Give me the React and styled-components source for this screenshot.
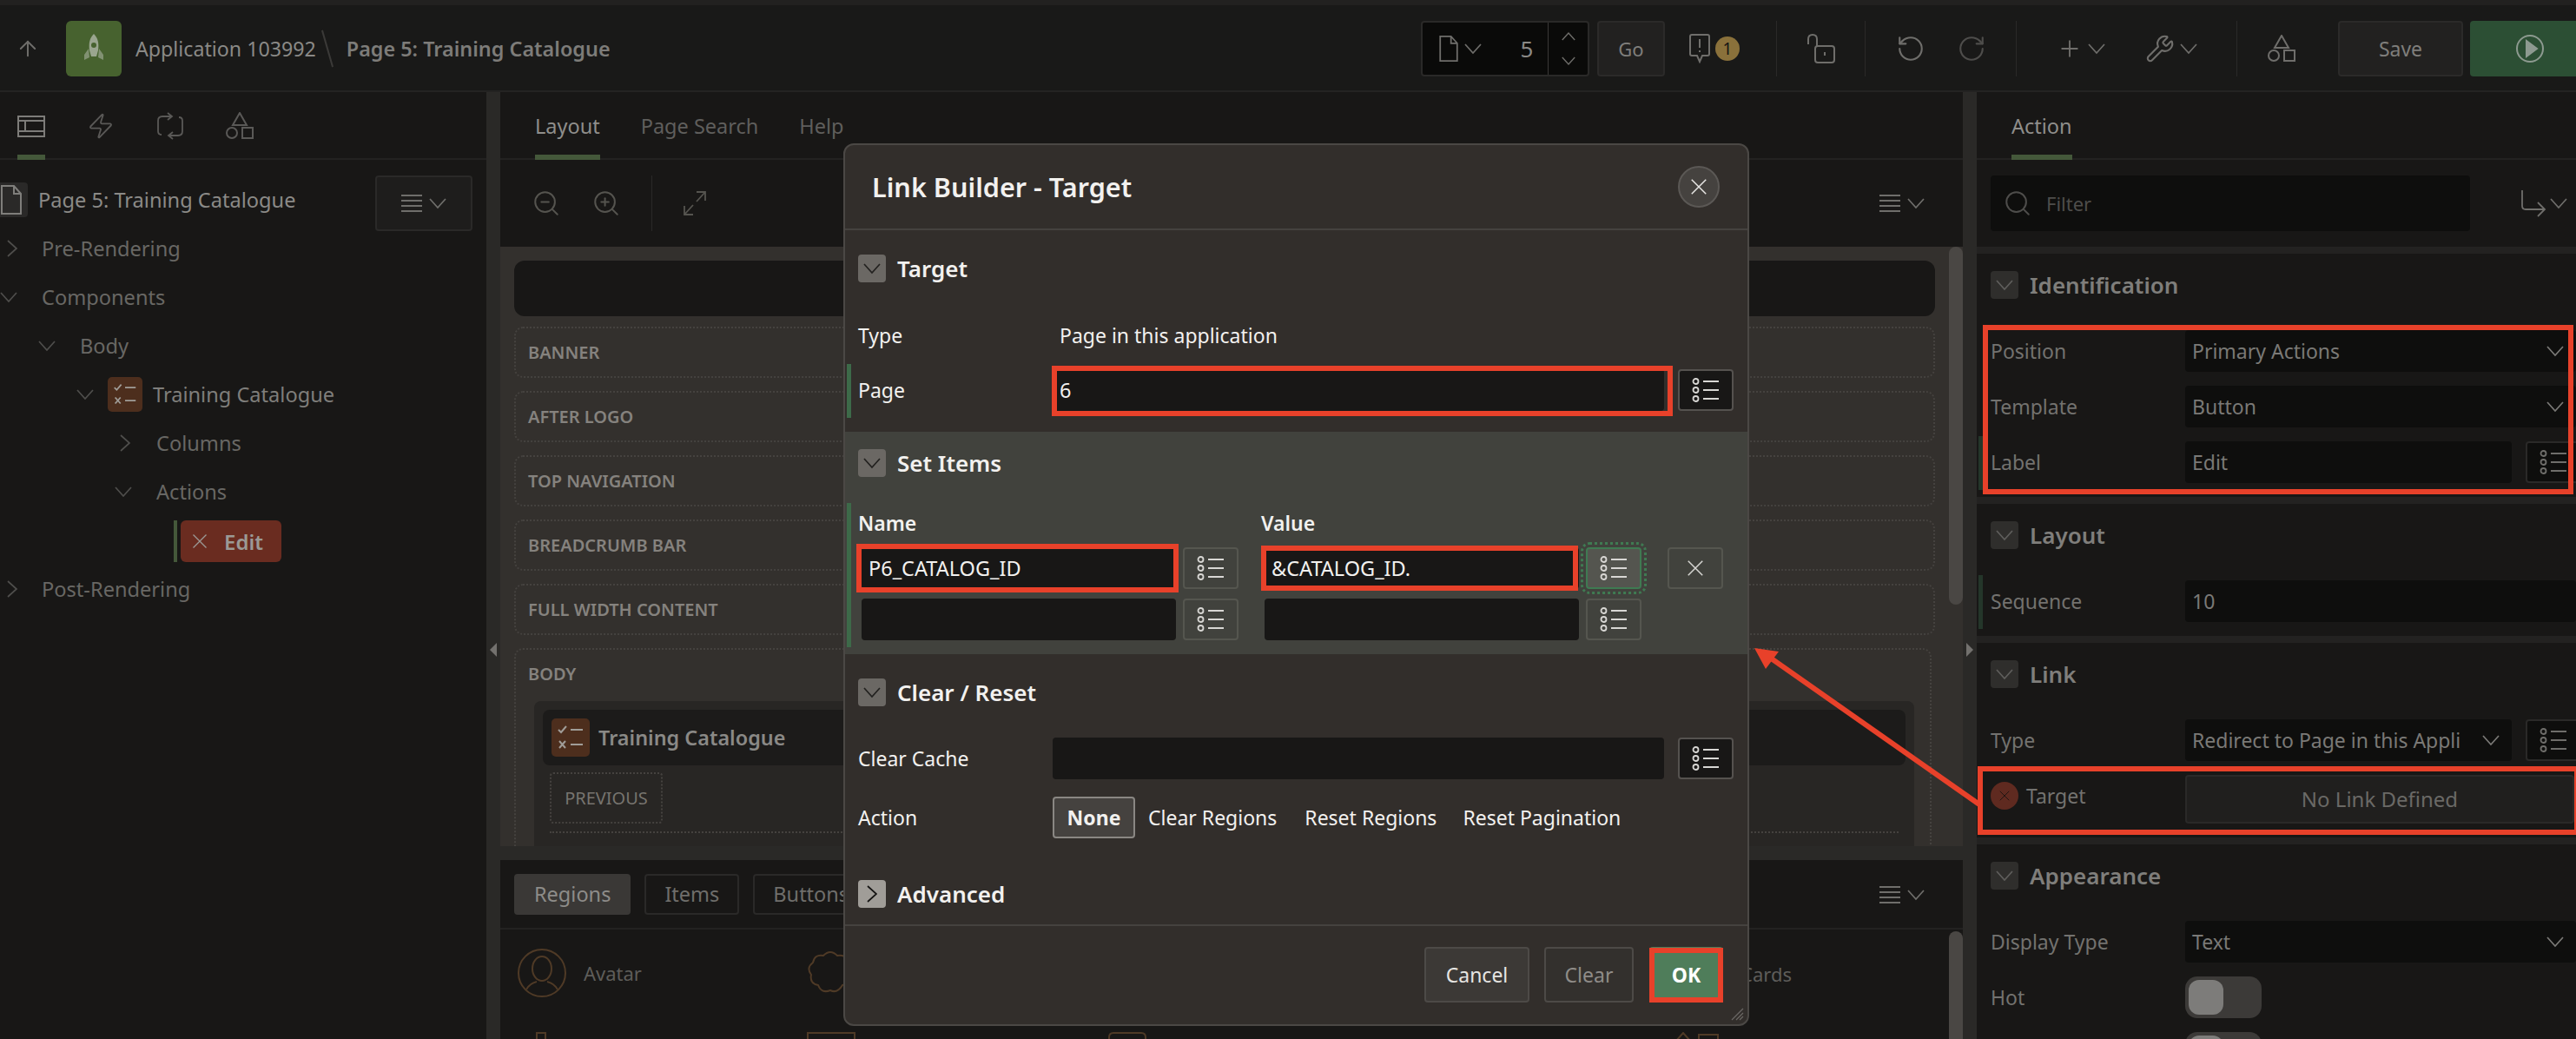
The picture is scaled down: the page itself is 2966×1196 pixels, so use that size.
import React from 'react';
import styled, { createGlobalStyle } from 'styled-components';
import { ArrowUp, Zap, RotateCcw, RotateCw, Wrench, Search, ZoomIn, ZoomOut, Plus } from 'lucide-react';

const GlobalStyle = createGlobalStyle`
  html, body { margin: 0; padding: 0; background: #181716; }
  body { font-family: "Noto Sans", "Open Sans", sans-serif; overflow: hidden; }
  * { box-sizing: border-box; }
`;

const RED = '#e8412a';

const Page = styled.div`
  position: relative;
  width: 2966px;
  height: 1196px;
  overflow: hidden;
  background: #181716;
  display: flex;
  flex-direction: column;
`;

/* top bar */
const TopBar = styled.div`
  height: 106px;
  flex: none;
  background: #191918;
  border-top: 6px solid #222120;
  border-bottom: 2px solid #242322;
  padding-top: 18px;
  display: flex;
  align-items: flex-start;
  color: #8b8a87;
`;
const BackSlot = styled.div`
  width: 76px;
  height: 64px;
  display: flex;
  align-items: center;
  padding-left: 18px;
  color: #6f6e6b;
`;
const AppTile = styled.div`
  width: 64px;
  height: 64px;
  border-radius: 6px;
  background: #47622f;
  display: flex;
  align-items: center;
  justify-content: center;
  color: #9aa58f;
`;
const AppName = styled.div`
  margin-left: 16px;
  line-height: 64px;
  font-size: 23.2px;
  color: #8a8986;
  white-space: nowrap;
`;
const Slash = styled.div`
  width: 2px;
  height: 44px;
  margin: 10px 21px 0 12px;
  background: #3b3a38;
  transform: rotate(-16deg);
`;
const PageName = styled.div`
  line-height: 64px;
  font-size: 23.4px;
  font-weight: 600;
  color: #7d7c79;
  white-space: nowrap;
`;
const TopTools = styled.div`
  margin-left: auto;
  display: flex;
  align-items: center;
  height: 64px;
`;
const PageBox = styled.div`
  width: 194px;
  height: 64px;
  background: #0a0a09;
  border: 2px solid #2a2928;
  border-radius: 4px;
  display: flex;
  align-items: center;
  color: #6f6e6b;
`;
const PageBoxIcon = styled.div`
  display: flex;
  align-items: center;
  gap: 6px;
  padding-left: 18px;
  width: 100px;
`;
const PageNumber = styled.div`
  width: 40px;
  font-size: 26px;
  color: #8a8986;
  text-align: center;
`;
const Stepper = styled.div`
  margin-left: 4px;
  flex: 1;
  height: 100%;
  border-left: 1px solid #3a3937;
  display: flex;
  flex-direction: column;
  align-items: center;
  justify-content: space-between;
  padding: 8px 0;
`;
const GoButton = styled.div`
  width: 78px;
  height: 64px;
  margin-left: 9px;
  background: #222120;
  border: 2px solid #2b2a29;
  border-radius: 4px;
  display: flex;
  align-items: center;
  justify-content: center;
  font-size: 22px;
  color: #7f7e7b;
`;
const Notify = styled.div`
  width: 128px;
  padding-left: 28px;
  display: flex;
  align-items: center;
  gap: 6px;
  color: #6f6e6b;
`;
const Badge = styled.div`
  width: 28px;
  height: 28px;
  border-radius: 50%;
  background: #8a713b;
  color: #151514;
  font-size: 19px;
  line-height: 28px;
  text-align: center;
`;
const ToolGroup = styled.div`
  height: 64px;
  width: ${p => p.$w}px;
  border-left: 1px solid #2a2928;
  display: flex;
  align-items: center;
  justify-content: center;
  gap: ${p => p.$gap || 8}px;
  color: #6f6e6b;
`;
const ToolPair = styled.div`
  display: flex;
  align-items: center;
  gap: 6px;
`;
const DimIcon = styled.div`
  display: flex;
  color: #4e4d4b;
`;
const SaveButton = styled.div`
  width: 144px;
  height: 64px;
  margin-left: 15px;
  background: #222120;
  border: 2px solid #2b2a29;
  border-radius: 4px;
  display: flex;
  align-items: center;
  justify-content: center;
  font-size: 23px;
  color: #7f7e7b;
`;
const RunButton = styled.div`
  width: 122px;
  height: 64px;
  margin-left: 8px;
  background: #2c4f34;
  border-radius: 4px 0 0 4px;
  display: flex;
  align-items: center;
  padding-left: 52px;
  color: #8d9a90;
`;

/* main columns */
const Main = styled.div`
  flex: 1;
  display: grid;
  grid-template-columns: 560px 16px 1684px 16px 690px;
  min-height: 0;
`;
const Column = styled.div`
  display: flex;
  flex-direction: column;
  min-height: 0;
  overflow: hidden;
`;
const Splitter = styled.div`
  background: #2a2927;
  display: flex;
  align-items: flex-start;
  justify-content: center;
  padding-top: 634px;
`;
const SplitArrow = styled.div`
  width: 0;
  height: 0;
  border-top: 8px solid transparent;
  border-bottom: 8px solid transparent;
  ${p => p.$left ? 'border-right: 8px solid #73716e;' : 'border-left: 8px solid #73716e;'}
`;
const Tabs = styled.div`
  height: 78px;
  flex: none;
  display: flex;
  border-bottom: 2px solid #232221;
  padding-left: ${p => p.$pad}px;
  gap: ${p => p.$gap || 0}px;
`;
const Tab = styled.div`
  height: 78px;
  display: flex;
  align-items: center;
  font-size: 23.5px;
  padding-top: 6px;
  color: ${p => p.$on ? '#8f8e8b' : '#5f5e5c'};
  border-bottom: 6px solid ${p => p.$on ? '#44583a' : 'transparent'};
  white-space: nowrap;
`;
const IconTab = styled(Tab)`
  width: ${p => p.$w || 32}px;
  justify-content: center;
  color: ${p => p.$on ? '#7d7c79' : '#5a5957'};
`;

/* tree */
const TreeHead = styled.div`
  height: 74px;
  flex: none;
  display: flex;
  align-items: flex-start;
`;
const RootIcon = styled.div`
  width: 32px;
  height: 40px;
  margin-top: 26px;
  background: #2a2928;
  border-radius: 0 4px 4px 0;
  color: #7f7e7b;
  display: flex;
  align-items: center;
`;
const RootName = styled.div`
  margin: 28px 0 0 12px;
  font-size: 23.6px;
  line-height: 36px;
  color: #8b8a87;
`;
const MenuButton = styled.div`
  width: 112px;
  height: 64px;
  margin: 18px 16px 0 auto;
  background: #1e1d1c;
  border: 2px solid #2a2928;
  border-radius: 4px;
  display: flex;
  align-items: center;
  justify-content: center;
  gap: 8px;
  color: #6f6e6b;
`;
const TreeRow = styled.div`
  height: 56px;
  flex: none;
  display: flex;
  align-items: center;
  padding-left: ${p => p.$indent}px;
  font-size: 23.6px;
  color: #686764;
`;
const TreeArrow = styled.div`
  width: ${p => p.$w || 48}px;
  flex: none;
  display: flex;
  color: #4f4e4c;
`;
const RegionTile = styled.div`
  width: ${p => p.$size}px;
  height: ${p => p.$size}px;
  flex: none;
  border-radius: 5px;
  background: #4d2e1d;
  color: #a09d98;
  display: flex;
  align-items: center;
  justify-content: center;
`;
const TreeTitle = styled.span`
  margin-left: 12px;
  color: #7f7e7b;
`;
const EditMark = styled.div`
  width: 4px;
  height: 48px;
  margin: 2px 4px 0 0;
  background: #44583a;
`;
const EditChip = styled.div`
  width: 116px;
  height: 48px;
  margin-top: 2px;
  border-radius: 6px;
  background: #6a2c20;
  color: #9b9995;
  display: flex;
  align-items: center;
  padding-left: 12px;
  gap: 18px;
  font-weight: 600;
  font-size: 24px;
`;

/* centre */
const CanvasTools = styled.div`
  height: 100px;
  flex: none;
  display: flex;
  align-items: center;
  padding: 0 44px 0 36px;
  color: #55544f;
  gap: 35px;
`;
const ToolRule = styled.div`
  width: 1px;
  height: 64px;
  background: #2a2928;
`;
const CanvasMenu = styled.div`
  margin-left: auto;
  display: flex;
  align-items: center;
  gap: 8px;
  color: #6f6e6b;
`;
const Canvas = styled.div`
  position: relative;
  height: 690px;
  flex: none;
  overflow: hidden;
  background: #33302d;
  padding: 16px 32px 0 16px;
  display: flex;
  flex-direction: column;
  gap: 15px;
`;
const CanvasBand = styled.div`
  height: 64px;
  flex: none;
  margin-bottom: -3px;
  background: #181716;
  border-radius: 12px;
`;
const Slot = styled.div`
  height: ${p => p.$h || 59}px;
  flex: none;
  border: 2px dotted #45423f;
  border-radius: 10px;
  padding: 0 14px;
  font-size: 20px;
  font-weight: 600;
  line-height: 55px;
  color: #85827e;
  text-transform: uppercase;
`;
const BodySlot = styled(Slot)`
  height: 300px;
  width: 1632px;
  margin-right: 4px;
`;
const RegionCard = styled.div`
  margin: 4px 4px 0 7px;
  background: #282624;
  border-radius: 8px 8px 0 0;
  height: 200px;
  padding: 10px;
`;
const RegionHead = styled.div`
  height: 64px;
  background: #1c1b1a;
  border-radius: 8px;
  padding-left: 10px;
  display: flex;
  align-items: center;
  gap: 10px;
  font-size: 23.4px;
  font-weight: 600;
  text-transform: none;
  color: #8a8986;
`;
const PositionSlot = styled.div`
  width: 130px;
  height: 59px;
  margin: 8px 0 0 8px;
  border: 2px dotted #45423f;
  border-radius: 4px;
  font-size: 20px;
  font-weight: 400;
  line-height: 55px;
  text-align: center;
  color: #77746f;
`;
const NextSlot = styled.div`
  height: 40px;
  margin: 9px 8px 0 8px;
  border-top: 2px dotted #45423f;
`;
const Scrollbar = styled.div`
  position: absolute;
  right: 0;
  top: ${p => p.$top}px;
  width: 16px;
  height: ${p => p.$h}px;
  background: #4a4744;
  border-radius: 8px;
`;
const HSplit = styled.div`
  height: 16px;
  flex: none;
  background: #2a2927;
`;
const Gallery = styled.div`
  position: relative;
  flex: 1;
`;
const GalleryTabs = styled.div`
  height: 80px;
  padding: 16px 0 0 16px;
  border-bottom: 2px solid #232221;
  display: flex;
  gap: 16px;
  align-items: flex-start;
  justify-content: flex-start;
`;
const GalleryTab = styled.div`
  height: 47px;
  padding: 0 21px;
  border-radius: 4px;
  font-size: 23.5px;
  line-height: 43px;
  background: ${p => p.$on ? '#3a3836' : 'transparent'};
  border: 2px solid ${p => p.$on ? '#3a3836' : '#2a2928'};
  color: ${p => p.$on ? '#8d8c89' : '#6f6e6b'};
`;
const GalleryMenu = styled.div`
  margin: 4px 44px 0 auto;
  display: flex;
  align-items: center;
  gap: 8px;
  color: #6f6e6b;
  height: 40px;
`;
const GalleryItem = styled.div`
  position: absolute;
  left: ${p => p.$x}px;
  top: ${p => p.$y}px;
  display: flex;
  align-items: center;
  gap: 20px;
  font-size: 22px;
  color: #5e5d5a;
  white-space: nowrap;
`;

/* right */
const FilterRow = styled.div`
  height: 100px;
  flex: none;
  padding: 18px 0 0 16px;
  display: flex;
  align-items: flex-start;
`;
const FilterBox = styled.div`
  width: 552px;
  height: 64px;
  background: #0e0e0d;
  border-radius: 4px;
  display: flex;
  align-items: center;
  gap: 16px;
  padding-left: 14px;
  font-size: 22px;
  color: #4e4d4b;
`;
const ReturnMenu = styled.div`
  margin: 16px 0 0 58px;
  display: flex;
  align-items: center;
  gap: 4px;
  color: #6f6e6b;
`;
const PropSection = styled.div`
  border-top: 8px solid #232221;
  padding: 20px 0 16px 16px;
`;
const SectionHead = styled.div`
  height: 32px;
  display: flex;
  align-items: center;
  gap: 13px;
  margin-bottom: 36px;
  font-size: 26px;
  font-weight: 600;
  color: #7f7e7b;
  line-height: 32px;
`;
const Toggle = styled.div`
  width: 32px;
  height: 32px;
  border-radius: 4px;
  background: #2f2e2c;
  color: #5f5e5c;
  display: flex;
  align-items: center;
  justify-content: center;
`;
const PropRow = styled.div`
  position: relative;
  min-height: 48px;
  display: flex;
  align-items: ${p => p.$top ? 'flex-start' : 'center'};
  margin-bottom: 16px;
  &:last-child { margin-bottom: 0; }
  ${p => p.$req && `&::before {
    content: '';
    position: absolute;
    left: -14px;
    top: -6px;
    bottom: -8px;
    width: 5px;
    background: #24362a;
  }`}
`;
const PropLabel = styled.div`
  width: 224px;
  flex: none;
  display: flex;
  align-items: center;
  gap: 9px;
  font-size: 23px;
  color: #73726f;
  margin-top: ${p => p.$mt || 0}px;
`;
const PropInput = styled.div`
  width: ${p => p.$w ? `${p.$w}px` : 'auto'};
  flex: ${p => p.$w ? 'none' : 1};
  height: 48px;
  background: #0e0e0d;
  border-radius: 4px;
  display: flex;
  align-items: center;
  justify-content: space-between;
  padding: 0 14px 0 8px;
  font-size: 23px;
  color: #7a7976;
  white-space: nowrap;
  overflow: hidden;
`;
const PropLov = styled.div`
  width: 64px;
  height: 48px;
  margin-left: 16px;
  flex: none;
  border: 2px solid #2a2928;
  border-radius: 4px;
  background: #0e0e0d;
  color: #6f6e6b;
  display: flex;
  align-items: center;
  justify-content: center;
`;
const LinkButton = styled.div`
  flex: 1;
  height: 56px;
  background: #201f1e;
  border: 2px solid #2a2928;
  border-radius: 4px;
  font-size: 24px;
  line-height: 52px;
  text-align: center;
  color: #6a6966;
  margin-right: 2px;
`;
const ErrorDot = styled.div`
  width: 32px;
  height: 32px;
  border-radius: 50%;
  background: #5f2a20;
  color: #1e1311;
  display: flex;
  align-items: center;
  justify-content: center;
`;
const Switch = styled.div`
  width: 88px;
  height: 48px;
  border-radius: 14px;
  background: #3c3a38;
  padding: 4px;
`;
const Knob = styled.div`
  width: 40px;
  height: 40px;
  border-radius: 12px;
  background: #7d7c7a;
`;
const FrameBox = styled.div`
  position: absolute;
  inset: ${p => p.$inset};
  border: 6px solid ${RED};
  pointer-events: none;
  z-index: 3;
`;

/* dialog */
const Dialog = styled.div`
  position: absolute;
  left: 971px;
  top: 165px;
  width: 1043px;
  height: 1016px;
  background: #322e2b;
  border: 2px solid #4b4845;
  border-radius: 12px;
  color: #f2f1ef;
  overflow: hidden;
  display: flex;
  flex-direction: column;
  z-index: 5;
`;
const DialogHead = styled.div`
  height: 98px;
  flex: none;
  border-bottom: 2px solid #45423f;
  padding: 0 32px 0 31px;
  display: flex;
  align-items: center;
  justify-content: space-between;
  font-size: 30.6px;
  font-weight: 600;
`;
const CloseButton = styled.div`
  width: 48px;
  height: 48px;
  border-radius: 50%;
  border: 2px solid #5b5855;
  background: #45423f;
  display: flex;
  align-items: center;
  justify-content: center;
  color: #e8e7e5;
`;
const DialogSection = styled.div`
  padding: ${p => p.$pad};
  background: ${p => p.$alt ? '#41423d' : 'transparent'};
`;
const DialogHeading = styled.div`
  height: 32px;
  display: flex;
  align-items: center;
  gap: 13px;
  font-size: 26px;
  font-weight: 600;
  margin-top: ${p => p.$mt || 0}px;
  margin-bottom: ${p => p.$mb || 0}px;
`;
const DialogToggle = styled.div`
  width: 32px;
  height: 32px;
  border-radius: 4px;
  background: ${p => p.$open ? '#6b6864' : '#a09d98'};
  color: ${p => p.$open ? '#22211f' : '#151413'};
  display: flex;
  align-items: center;
  justify-content: center;
`;
const FormRow = styled.div`
  position: relative;
  height: 48px;
  display: flex;
  align-items: center;
  font-size: 23px;
  margin-top: ${p => p.$mt || 0}px;
`;
const FormLabel = styled.div`
  width: 224px;
  flex: none;
`;
const FormValue = styled.div`
  padding-left: 8px;
`;
const RequiredBar = styled.div`
  position: absolute;
  left: -13px;
  top: ${p => p.$top}px;
  bottom: ${p => p.$bottom}px;
  width: 5px;
  background: #3d6a49;
`;
const Field = styled.div`
  position: relative;
  width: ${p => p.$w}px;
  height: 48px;
  flex: none;
  background: #181716;
  border-radius: 4px;
  font-size: 23.5px;
  line-height: 48px;
  padding: 0 8px;
  color: #f2f1ef;
`;
const ValueField = styled(Field)`
  margin-left: 30px;
`;
const LovButton = styled.div`
  position: relative;
  width: 64px;
  height: 48px;
  flex: none;
  margin-left: ${p => p.$ml || 8}px;
  border: 2px solid ${p => p.$focus ? '#3f7a52' : p.$dark ? '#55524f' : '#55564f'};
  border-radius: 4px;
  background: ${p => p.$dark ? '#181716' : '#41423d'};
  color: #d8d7d4;
  display: flex;
  align-items: center;
  justify-content: center;
  ${p => p.$focus && `background: #54554f; outline: 3px dotted #3f7a52; outline-offset: 3px;`}
`;
const ItemGrid = styled.div`
  position: relative;
  margin-top: 26px;
  padding-top: 10px;
`;
const ColumnHead = styled.div`
  display: flex;
  font-size: 23px;
  font-weight: 600;
  height: 34px;
  line-height: 34px;
`;
const HeadCell = styled.div`
  width: ${p => p.$w}px;
  flex: none;
`;
const ItemRow = styled.div`
  display: flex;
  align-items: center;
  padding-left: 4px;
  margin-top: 11px;
`;
const RadioSet = styled.div`
  display: flex;
  align-items: center;
  font-size: 23px;
`;
const Radio = styled.div`
  height: 48px;
  width: ${p => p.$on ? '95px' : 'auto'};
  line-height: ${p => p.$on ? '44px' : '48px'};
  margin-right: ${p => p.$gap}px;
  text-align: center;
  font-weight: ${p => p.$on ? 700 : 400};
  background: ${p => p.$on ? '#45423f' : 'transparent'};
  border: ${p => p.$on ? '2px solid #8a8783' : 'none'};
  border-radius: 4px;
  white-space: nowrap;
`;
const DialogFooter = styled.div`
  margin-top: auto;
  height: 115px;
  flex: none;
  border-top: 2px solid #45423f;
  padding: 24px 28px 0 0;
  display: flex;
  justify-content: flex-end;
  align-items: flex-start;
  font-size: 23px;
`;
const FootButton = styled.div`
  position: relative;
  width: ${p => p.$w}px;
  height: 64px;
  margin-left: ${p => p.$ml || 0}px;
  border-radius: 4px;
  border: 2px solid ${p => p.$ok ? '#4f7d5a' : '#4d4a47'};
  background: ${p => p.$ok ? '#4f7d5a' : p.$off ? '#33302d' : '#3c3936'};
  color: ${p => p.$ok ? '#fff' : p.$off ? '#8f8c88' : '#e6e5e2'};
  font-weight: ${p => p.$ok ? 700 : 400};
  display: flex;
  align-items: center;
  justify-content: center;
`;
const Grip = styled.div`
  position: absolute;
  right: 4px;
  bottom: 4px;
  color: #6b6865;
  display: flex;
`;
const Annotation = styled.svg`
  position: absolute;
  left: 0;
  top: 0;
  z-index: 4;
  pointer-events: none;
`;

/* icons */
const Chev = ({ dir = 'down', size = 20 }) => {
  const paths = { down: 'M1 5l9 10 9-10', up: 'M1 15l9-10 9 10', right: 'M5 1l10 9-10 9' };
  return (
    <svg width={size} height={size} viewBox="0 0 20 20" fill="none" stroke="currentColor" strokeWidth="1.7">
      <path d={paths[dir]} />
    </svg>
  );
};
const Cross = ({ size = 24, w = 1.8 }) => (
  <svg width={size} height={size} viewBox="0 0 24 24" fill="none" stroke="currentColor" strokeWidth={w}>
    <path d="M3 3l18 18M21 3L3 21" />
  </svg>
);
const Lov = () => (
  <svg width="32" height="28" viewBox="0 0 32 28" fill="none" stroke="currentColor" strokeWidth="1.8">
    <circle cx="4.5" cy="4" r="3" /><circle cx="4.5" cy="14" r="3" /><circle cx="4.5" cy="24" r="3" />
    <path d="M13 4h18M13 14h18M13 24h18" strokeWidth="2" />
  </svg>
);
const MenuLines = () => (
  <svg width="24" height="22" viewBox="0 0 24 22" fill="none" stroke="currentColor" strokeWidth="2">
    <path d="M0 2h24M0 8h24M0 14h24M0 20h24" />
  </svg>
);
const PageGlyph = ({ w = 26, h = 36 }) => (
  <svg width={w} height={h} viewBox="0 0 26 36" fill="none" stroke="currentColor" strokeWidth="2">
    <path d="M2 2h14l8 9v23H2zM16 2v9h8" />
  </svg>
);
const Rocket = () => (
  <svg width="26" height="36" viewBox="0 0 26 36" fill="currentColor">
    <path d="M13 1c5 5 6 11 5 19l-2 7h-6l-2-7C7 12 8 6 13 1z" />
    <circle cx="13" cy="14" r="3" fill="#47622f" />
    <path d="M7 18l-5 7v6l6-3zM19 18l5 7v6l-6-3z" opacity=".7" />
  </svg>
);
const LayoutGlyph = () => (
  <svg width="32" height="25" viewBox="0 0 32 25" fill="none" stroke="currentColor" strokeWidth="2">
    <rect x="1" y="1" width="30" height="23" /><path d="M1 6h30M1 18h30M9 6v12" />
  </svg>
);
const Cycle = () => (
  <svg width="32" height="32" viewBox="0 0 32 32" fill="none" stroke="currentColor" strokeWidth="1.8">
    <path d="M17 5H7Q2 5 2 10v12q0 4 4 4M15 27h10q5 0 5-5V10q0-4-4-4M13 1l5 4-5 4M19 23l-5 4 5 4" />
  </svg>
);
const ShapesGlyph = () => (
  <svg width="32" height="32" viewBox="0 0 32 32" fill="none" stroke="currentColor" strokeWidth="2">
    <path d="M16 1l8 14H8z" /><circle cx="7" cy="24" r="6" /><rect x="19" y="18" width="12" height="12" />
  </svg>
);
const Expand = () => (
  <svg width="28" height="30" viewBox="0 0 28 30" fill="none" stroke="currentColor" strokeWidth="1.8">
    <path d="M2 28L12 17M16 13L26 2M16 2h10v10M2 18v10h10" />
  </svg>
);
const Comment = () => (
  <svg width="24" height="34" viewBox="0 0 24 34" fill="none" stroke="currentColor" strokeWidth="2">
    <path d="M3 1h18q2 0 2 2v20q0 2-2 2h-6l-3 7-3-7H3q-2 0-2-2V3q0-2 2-2zM12 6v10M12 19v2" />
  </svg>
);
const OpenLock = () => (
  <svg width="34" height="34" viewBox="0 0 34 34" fill="none" stroke="currentColor" strokeWidth="2">
    <path d="M2 12V6q0-5 5-5t5 5v8" /><rect x="10" y="14" width="22" height="19" rx="3" /><path d="M21 21v4" />
  </svg>
);
const PlayRing = () => (
  <svg width="34" height="34" viewBox="0 0 34 34" fill="none" stroke="currentColor" strokeWidth="2">
    <circle cx="17" cy="17" r="15" /><path d="M13 8l12 9-12 9z" fill="currentColor" />
  </svg>
);
const ReturnArrow = () => (
  <svg width="30" height="32" viewBox="0 0 30 32" fill="none" stroke="currentColor" strokeWidth="1.8">
    <path d="M2 1v18q0 4 4 4h22M20 15l8 8-8 8" />
  </svg>
);
const CheckList = ({ size = 32 }) => (
  <svg width={size} height={size} viewBox="0 0 32 32" fill="none" stroke="currentColor" strokeWidth="2">
    <path d="M2 7l3 3 6-7M16 7h14M3 20l7 8M10 20l-7 8M16 24h14" />
  </svg>
);
const Avatar = () => (
  <svg width="56" height="56" viewBox="0 0 56 56" fill="none" stroke="#4f3a26" strokeWidth="2">
    <circle cx="28" cy="28" r="27" /><ellipse cx="28" cy="23" rx="11" ry="14" /><path d="M10 47q4-7 12-9M46 47q-4-7-12-9" />
  </svg>
);
const Scallop = () => (
  <svg width="56" height="56" viewBox="0 0 56 56" fill="none" stroke="#4f3a26" strokeWidth="2">
    <path d="M20 8q8-8 16 0q10-2 12 8q8 6 2 14q2 10-8 12q-6 10-14 6q-10 4-14-6q-10-2-8-12q-6-8 2-14q2-10 12-8z" />
  </svg>
);
const NextIcon = ({ w, d }) => (
  <svg width={w} height="10" viewBox={`0 0 ${w} 10`} fill="none" stroke="#4f3a26" strokeWidth="2">
    <path d={d} />
  </svg>
);
const Lines = () => (
  <svg width="16" height="16" viewBox="0 0 16 16" fill="none" stroke="currentColor" strokeWidth="1.2">
    <path d="M15 2L2 15M15 7l-8 8M15 11l-4 4" />
  </svg>
);

const MenuToggle = () => <><MenuLines /><Chev /></>;

const LinkBuilder = () => (
  <Dialog>
    <DialogHead>
      Link Builder - Target
      <CloseButton><Cross size={22} w={1.6} /></CloseButton>
    </DialogHead>
    <DialogSection $pad="28px 16px 24px 15px">
      <DialogHeading $mb={37}>
        <DialogToggle $open><Chev /></DialogToggle>Target
      </DialogHeading>
      <FormRow>
        <FormLabel>Type</FormLabel>
        <FormValue>Page in this application</FormValue>
      </FormRow>
      <FormRow $mt={15}>
        <RequiredBar $top={-6} $bottom={-8} />
        <FormLabel>Page</FormLabel>
        <Field $w={704}>
          6
          <FrameBox $inset="-4px -10px -6px -1px" />
        </Field>
        <LovButton $dark $ml={16}><Lov /></LovButton>
      </FormRow>
    </DialogSection>
    <DialogSection $alt $pad="20px 16px 16px 15px">
      <DialogHeading>
        <DialogToggle $open><Chev /></DialogToggle>Set Items
      </DialogHeading>
      <ItemGrid>
        <RequiredBar $top={4} $bottom={-8} />
        <ColumnHead>
          <HeadCell $w={464}>Name</HeadCell>
          <HeadCell $w={200}>Value</HeadCell>
        </ColumnHead>
        <ItemRow>
          <Field $w={362}>
            P6_CATALOG_ID
            <FrameBox $inset="-4px -3px -4px -6px" />
          </Field>
          <LovButton><Lov /></LovButton>
          <ValueField $w={362}>
            &amp;CATALOG_ID.
            <FrameBox $inset="-2px 1px -2px -4px" />
          </ValueField>
          <LovButton $focus><Lov /></LovButton>
          <LovButton $ml={30}><Cross size={22} w={1.6} /></LovButton>
        </ItemRow>
        <ItemRow>
          <Field $w={362} />
          <LovButton><Lov /></LovButton>
          <ValueField $w={362} />
          <LovButton><Lov /></LovButton>
        </ItemRow>
      </ItemGrid>
    </DialogSection>
    <DialogSection $pad="28px 16px 0 15px">
      <DialogHeading $mb={36}>
        <DialogToggle $open><Chev /></DialogToggle>Clear / Reset
      </DialogHeading>
      <FormRow>
        <FormLabel>Clear Cache</FormLabel>
        <Field $w={704} />
        <LovButton $dark $ml={16}><Lov /></LovButton>
      </FormRow>
      <FormRow $mt={20}>
        <FormLabel>Action</FormLabel>
        <RadioSet>
          <Radio $on $gap={15}>None</Radio>
          <Radio $gap={32}>Clear Regions</Radio>
          <Radio $gap={30}>Reset Regions</Radio>
          <Radio $gap={0}>Reset Pagination</Radio>
        </RadioSet>
      </FormRow>
      <DialogHeading $mt={48}>
        <DialogToggle><Chev dir="right" /></DialogToggle>Advanced
      </DialogHeading>
    </DialogSection>
    <DialogFooter>
      <FootButton $w={121}>Cancel</FootButton>
      <FootButton $w={103} $ml={17} $off>Clear</FootButton>
      <FootButton $w={85} $ml={18} $ok>
        OK
        <FrameBox $inset="-1px -2px -2px -2px" />
      </FootButton>
    </DialogFooter>
    <Grip><Lines /></Grip>
  </Dialog>
);

export default function App() {
  return (
    <Page>
      <GlobalStyle />
      <TopBar>
        <BackSlot><ArrowUp size={28} strokeWidth={1.7} /></BackSlot>
        <AppTile><Rocket /></AppTile>
        <AppName>Application 103992</AppName>
        <Slash />
        <PageName>Page 5: Training Catalogue</PageName>
        <TopTools>
          <PageBox>
            <PageBoxIcon><PageGlyph w={24} h={32} /><Chev /></PageBoxIcon>
            <PageNumber>5</PageNumber>
            <Stepper><Chev dir="up" size={16} /><Chev size={16} /></Stepper>
          </PageBox>
          <GoButton>Go</GoButton>
          <Notify><Comment /><Badge>1</Badge></Notify>
          <ToolGroup $w={102}><OpenLock /></ToolGroup>
          <ToolGroup $w={174} $gap={36}>
            <RotateCcw size={34} strokeWidth={1.5} />
            <DimIcon><RotateCw size={34} strokeWidth={1.5} /></DimIcon>
          </ToolGroup>
          <ToolGroup $w={254} $gap={46}>
            <ToolPair><Plus size={30} strokeWidth={1.5} /><Chev /></ToolPair>
            <ToolPair><Wrench size={34} strokeWidth={1.5} /><Chev /></ToolPair>
          </ToolGroup>
          <ToolGroup $w={102}><ShapesGlyph /></ToolGroup>
          <SaveButton>Save</SaveButton>
          <RunButton><PlayRing /></RunButton>
        </TopTools>
      </TopBar>

      <Main>
        <Column>
          <Tabs $pad={20} $gap={48}>
            <IconTab $on><LayoutGlyph /></IconTab>
            <IconTab><Zap size={34} strokeWidth={1.4} /></IconTab>
            <IconTab><Cycle /></IconTab>
            <IconTab><ShapesGlyph /></IconTab>
          </Tabs>
          <TreeHead>
            <RootIcon><PageGlyph w={26} h={36} /></RootIcon>
            <RootName>Page 5: Training Catalogue</RootName>
            <MenuButton><MenuToggle /></MenuButton>
          </TreeHead>
          <TreeRow $indent={4}><TreeArrow $w={44}><Chev dir="right" /></TreeArrow>Pre-Rendering</TreeRow>
          <TreeRow $indent={0}><TreeArrow $w={48}><Chev /></TreeArrow>Components</TreeRow>
          <TreeRow $indent={44}><TreeArrow $w={48}><Chev /></TreeArrow>Body</TreeRow>
          <TreeRow $indent={88}>
            <TreeArrow $w={36}><Chev /></TreeArrow>
            <RegionTile $size={40}><CheckList size={28} /></RegionTile>
            <TreeTitle>Training Catalogue</TreeTitle>
          </TreeRow>
          <TreeRow $indent={134}><TreeArrow $w={46}><Chev dir="right" /></TreeArrow>Columns</TreeRow>
          <TreeRow $indent={132}><TreeArrow $w={48}><Chev /></TreeArrow>Actions</TreeRow>
          <TreeRow $indent={200}>
            <EditMark />
            <EditChip><Cross size={20} w={1.6} />Edit</EditChip>
          </TreeRow>
          <TreeRow $indent={4}><TreeArrow $w={44}><Chev dir="right" /></TreeArrow>Post-Rendering</TreeRow>
        </Column>

        <Splitter><SplitArrow $left /></Splitter>

        <Column>
          <Tabs $pad={40} $gap={47}>
            <Tab $on>Layout</Tab>
            <Tab>Page Search</Tab>
            <Tab>Help</Tab>
          </Tabs>
          <CanvasTools>
            <ZoomOut size={34} strokeWidth={1.4} />
            <ZoomIn size={34} strokeWidth={1.4} />
            <ToolRule />
            <Expand />
            <CanvasMenu><MenuToggle /></CanvasMenu>
          </CanvasTools>
          <Canvas>
            <CanvasBand />
            <Slot>Banner</Slot>
            <Slot>After Logo</Slot>
            <Slot>Top Navigation</Slot>
            <Slot>Breadcrumb Bar</Slot>
            <Slot>Full Width Content</Slot>
            <BodySlot>
              Body
              <RegionCard>
                <RegionHead>
                  <RegionTile $size={44}><CheckList /></RegionTile>
                  Training Catalogue
                </RegionHead>
                <PositionSlot>PREVIOUS</PositionSlot>
                <NextSlot />
              </RegionCard>
            </BodySlot>
            <Scrollbar $top={0} $h={412} />
          </Canvas>
          <HSplit />
          <Gallery>
            <GalleryTabs>
              <GalleryTab $on>Regions</GalleryTab>
              <GalleryTab>Items</GalleryTab>
              <GalleryTab>Buttons</GalleryTab>
              <GalleryMenu><MenuToggle /></GalleryMenu>
            </GalleryTabs>
            <GalleryItem $x={20} $y={102}><Avatar />Avatar</GalleryItem>
            <GalleryItem $x={352} $y={102}><Scallop />Badge</GalleryItem>
            <GalleryItem $x={1428} $y={116}>Cards</GalleryItem>
            <GalleryItem $x={41} $y={198}><NextIcon w={12} d="M1 10V1h10v9" /></GalleryItem>
            <GalleryItem $x={353} $y={198}><NextIcon w={56} d="M1 10V1h54v9" /></GalleryItem>
            <GalleryItem $x={700} $y={198}><NextIcon w={44} d="M1 10V6q0-5 5-5h32q5 0 5 5v4" /></GalleryItem>
            <GalleryItem $x={1352} $y={198}><NextIcon w={52} d="M2 10l8-9 8 9M28 10V3h22v7" /></GalleryItem>
            <Scrollbar $top={82} $h={140} />
          </Gallery>
        </Column>

        <Splitter><SplitArrow /></Splitter>

        <Column>
          <Tabs $pad={40}>
            <Tab $on>Action</Tab>
          </Tabs>
          <FilterRow>
            <FilterBox><Search size={34} strokeWidth={1.4} />Filter</FilterBox>
            <ReturnMenu><ReturnArrow /><Chev /></ReturnMenu>
          </FilterRow>
          <PropSection>
            <SectionHead><Toggle><Chev /></Toggle>Identification</SectionHead>
            <PropRow>
              <FrameBox $inset="-6px 3px -141px -9px" />
              <PropLabel>Position</PropLabel>
              <PropInput>Primary Actions<Chev /></PropInput>
            </PropRow>
            <PropRow>
              <PropLabel>Template</PropLabel>
              <PropInput>Button<Chev /></PropInput>
            </PropRow>
            <PropRow $req>
              <PropLabel>Label</PropLabel>
              <PropInput $w={376}>Edit</PropInput>
              <PropLov><Lov /></PropLov>
            </PropRow>
          </PropSection>
          <PropSection>
            <SectionHead><Toggle><Chev /></Toggle>Layout</SectionHead>
            <PropRow $req>
              <PropLabel>Sequence</PropLabel>
              <PropInput>10</PropInput>
            </PropRow>
          </PropSection>
          <PropSection>
            <SectionHead><Toggle><Chev /></Toggle>Link</SectionHead>
            <PropRow>
              <PropLabel>Type</PropLabel>
              <PropInput $w={376}>Redirect to Page in this Appli<Chev /></PropInput>
              <PropLov><Lov /></PropLov>
            </PropRow>
            <PropRow $top>
              <FrameBox $inset="-10px -4px -13px -15px" />
              <PropLabel $mt={8}><ErrorDot><Cross size={14} w={1.6} /></ErrorDot>Target</PropLabel>
              <LinkButton>No Link Defined</LinkButton>
            </PropRow>
          </PropSection>
          <PropSection>
            <SectionHead><Toggle><Chev /></Toggle>Appearance</SectionHead>
            <PropRow>
              <PropLabel>Display Type</PropLabel>
              <PropInput>Text<Chev /></PropInput>
            </PropRow>
            <PropRow>
              <PropLabel>Hot</PropLabel>
              <Switch><Knob /></Switch>
            </PropRow>
            <PropRow>
              <PropLabel />
              <Switch><Knob /></Switch>
            </PropRow>
          </PropSection>
        </Column>
      </Main>

      <LinkBuilder />

      <Annotation width="2966" height="1196" viewBox="0 0 2966 1196">
        <line x1="2279" y1="926" x2="2038" y2="757" stroke={RED} strokeWidth="6" />
        <polygon points="2020,746 2048,750 2033,770" fill={RED} />
      </Annotation>
    </Page>
  );
}
